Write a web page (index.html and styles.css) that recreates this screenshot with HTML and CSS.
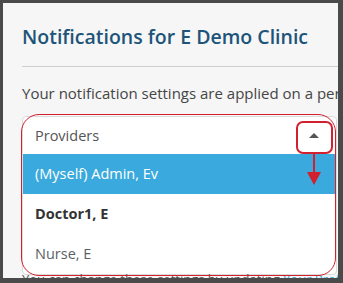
FILE: index.html
```html
<!DOCTYPE html>
<html lang="en">
<head>
  <meta charset="UTF-8">
  <title>Notifications</title>
  <link rel="stylesheet" href="styles.css">
</head>
<body>
  <div class="frame">
    <div class="page">
      <h1 class="page-title">Notifications for E Demo Clinic</h1>
      <hr class="divider">
      <p class="intro">Your notification settings are applied on a per-clinic basis.</p>

      <div class="select">
        <div class="select-head">
          <span>Providers</span>
          <span class="caret"></span>
        </div>
        <ul class="select-list">
          <li class="option active">(Myself) Admin, Ev</li>
          <li class="option bold">Doctor1, E</li>
          <li class="option muted">Nurse, E</li>
        </ul>
      </div>

      <p class="note">You can change these settings by updating <a href="#">Your Profile</a>.</p>
    </div>

    <!-- annotation overlay -->
    <div class="mark-outline"></div>
    <div class="mark-caret"></div>
    <svg class="mark-arrow" width="16" height="34" viewBox="0 0 16 34">
      <line x1="8" y1="0" x2="8" y2="22" stroke="#d2202e" stroke-width="2"/>
      <polygon points="1,20 15,20 8,33" fill="#d2202e"/>
    </svg>
  </div>
</body>
</html>
```

FILE: styles.css
```css
body {
  margin: 0;
  background: #4a4a4a;
  font-family: "Open Sans", sans-serif;
}

.frame {
  position: relative;
  margin: 3px 5px 5px 3px;
  height: 275px;
  background: #f6f6f6;
  overflow: hidden;
}

.page {
  width: 420px;
  padding: 22px 0 0 19px;
}

.page-title {
  margin: 0;
  font-size: 19.5px;
  line-height: 24px;
  font-weight: 600;
  color: #1d5479;
}

.divider {
  margin: 17px 0 0;
  border: none;
  border-top: 1px solid #cfcfcf;
}

.intro {
  margin: 15px 0 0;
  font-size: 15px;
  line-height: 22px;
  color: #454545;
  white-space: nowrap;
}

.select {
  margin-top: 12px;
  width: 313px;
  background: #fff;
  border: 1px solid #dcdcdc;
  border-radius: 4px;
  overflow: hidden;
}

.select-head {
  display: flex;
  align-items: center;
  justify-content: space-between;
  height: 37px;
  padding: 0 17px 0 12px;
  font-size: 14.5px;
  color: #555;
}

.caret {
  width: 0;
  height: 0;
  border-left: 5px solid transparent;
  border-right: 5px solid transparent;
  border-bottom: 5px solid #555;
}

.select-list {
  list-style: none;
  margin: 0;
  padding: 0;
}

.option {
  height: 40px;
  line-height: 40px;
  padding: 0 12px;
  font-size: 14.5px;
  color: #3a3a3a;
}

.option.active {
  background: #3aa9dd;
  color: #fff;
}

.option.bold {
  font-weight: 700;
  color: #333;
}

.option.muted {
  color: #5b5f66;
}

.note {
  margin: -4px 0 0;
  font-size: 13px;
  line-height: 16px;
  color: #555;
  white-space: nowrap;
}

.note a {
  color: #3aa9dd;
  text-decoration: none;
}

.mark-outline {
  position: absolute;
  left: 18px;
  top: 111px;
  width: 313px;
  height: 160px;
  border: 1.5px solid #d2202e;
  border-radius: 18px;
}

.mark-caret {
  position: absolute;
  left: 293px;
  top: 118px;
  width: 33px;
  height: 29px;
  border: 2px solid #d2202e;
  border-radius: 7px;
}

.mark-arrow {
  position: absolute;
  left: 303px;
  top: 149px;
}
```
